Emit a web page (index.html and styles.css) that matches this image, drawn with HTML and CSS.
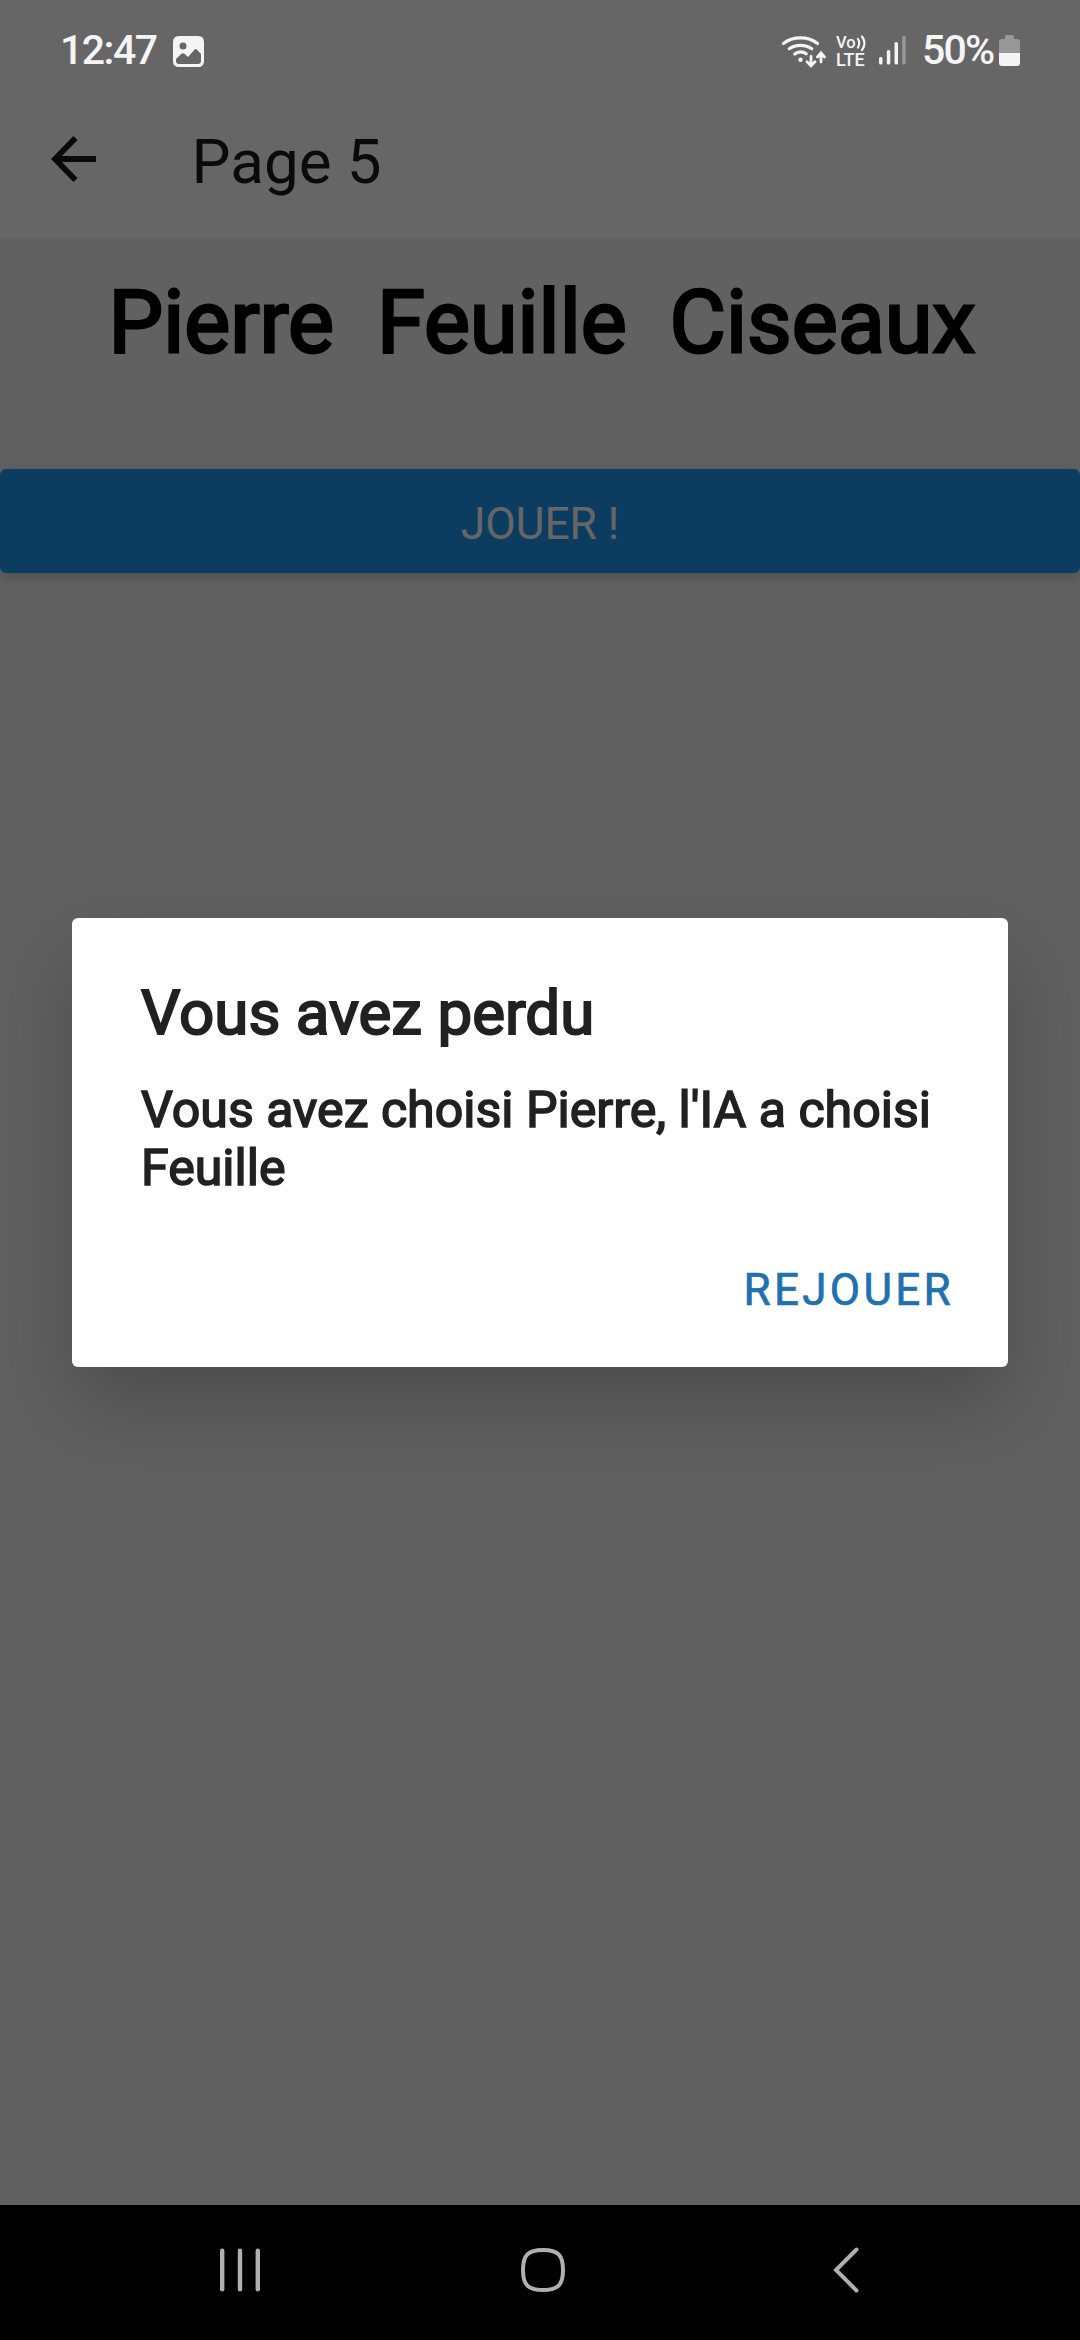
FILE: index.html
```html
<!DOCTYPE html>
<html lang="fr">
<head>
<meta charset="utf-8">
<title>Page 5</title>
<link rel="stylesheet" href="styles.css">
</head>
<body>
<div class="screen">
  <div class="status">
    <span class="clock">12:47</span>
    <svg class="picture" width="31" height="31" viewBox="0 0 31 31"><path fill="currentColor" fill-rule="evenodd" d="M6 0H25Q31 0 31 6V25Q31 31 25 31H6Q0 31 0 25V6Q0 0 6 0ZM10 6.500A3.500 3.500 0 1 0 10 13.500A3.500 3.500 0 1 0 10 6.500ZM3 23V25Q3 28 6 28H25Q28 28 28 25V18L24 13.700Q22.700 12.500 21.400 13.700L15 21L11.500 17.800Q10 16.800 8.500 17.800Z"/></svg>
    <div class="indicators">
      <svg class="wifi" width="46" height="34" viewBox="0 0 46 34" fill="none" stroke="currentColor" stroke-width="3.200" stroke-linecap="round"><path d="M3.500 8.500Q10.500 2.900 20.500 2.900Q30.500 2.900 37.500 8.500M9.300 13.700Q14 10.300 20.500 10.300Q27 10.300 31.700 13.700M14.800 19Q17.300 16.800 20.500 16.800Q23.700 16.800 26.200 18.800"/><circle cx="20.500" cy="24.800" r="2.200" fill="currentColor" stroke="none"/><path stroke-width="2.800" d="M31 21.500V31M27 26.800L31 30.800L35 26.800M41 27V18.500M37.500 22L41 18L44.500 22"/></svg>
      <div class="volte"><span class="vo">Vo<svg width="11" height="17" viewBox="0 0 11 17" fill="none" stroke="currentColor" stroke-width="2.200" stroke-linecap="round"><path d="M2 4Q4.500 8 2 12.500M6 1.500Q11 8 6 15"/></svg></span><span class="lte">LTE</span></div>
      <svg class="signal" width="28" height="30" viewBox="0 0 28 30" fill="currentColor"><rect x="0" y="22" width="3.500" height="7.500" rx="1.500"/><rect x="7.800" y="15" width="3.500" height="14.500" rx="1.500"/><rect x="15.500" y="7" width="3.500" height="22.500" rx="1.500"/><rect x="23.200" y="0.500" width="3.500" height="29" rx="1.500" opacity=".35"/></svg>
      <span class="percent">50%</span>
      <svg class="battery" width="21" height="32" viewBox="0 0 21 32" fill="currentColor"><path opacity=".35" d="M6 1.500Q6 0 7.500 0H13.500Q15 0 15 1.500V4H18Q21 4 21 7V18H0V7Q0 4 3 4H6Z"/><path d="M0 18H21V28Q21 31 18 31H3Q0 31 0 28Z"/></svg>
    </div>
  </div>
  <header class="appbar">
    <svg class="arrow" width="45" height="46" viewBox="0 0 45 46" fill="none" stroke="currentColor" stroke-width="5.800"><path d="M45 23H5M24.500 2L4 23L24.500 44"/></svg>
    <h1 class="title">Page 5</h1>
  </header>
  <main class="content">
    <h2 class="heading">Pierre&nbsp; Feuille&nbsp; Ciseaux</h2>
    <button class="play">JOUER !</button>
  </main>
  <nav class="navbar">
    <svg width="40" height="46" viewBox="0 0 40 46" fill="currentColor"><rect x="0" y="1.500" width="4.400" height="43" rx="2.200"/><rect x="17.800" y="1.500" width="4.400" height="43" rx="2.200"/><rect x="35.600" y="1.500" width="4.400" height="43" rx="2.200"/></svg>
    <svg class="home" width="44" height="46" viewBox="0 0 44 46" fill="none" stroke="currentColor" stroke-width="4"><path d="M22 3C37 3 42 8 42 23C42 38 37 43 22 43C7 43 2 38 2 23C2 8 7 3 22 3Z"/></svg>
    <svg class="back" width="27" height="46" viewBox="0 0 27 46" fill="none" stroke="currentColor" stroke-width="4" stroke-linecap="round"><path d="M23.500 2.500L3 23L23.500 43.500"/></svg>
  </nav>
  <div class="scrim">
    <section class="dialog" role="dialog">
      <h2 class="dialog-title">Vous avez perdu</h2>
      <p class="message">Vous avez choisi Pierre, l'IA a choisi Feuille</p>
      <button class="replay">REJOUER</button>
    </section>
  </div>
</div>
</body>
</html>
```
FILE: styles.css
```css
* { box-sizing: border-box; }
body { margin: 0; font-family: Roboto, sans-serif; }
svg { display: block; flex: none; }
h1, h2, p { margin: 0; font-weight: 400; }
button { border: 0; font-family: inherit; }

.screen { position: relative; width: 1080px; height: 2340px; display: flex; flex-direction: column; background: #f2f2f2; overflow: hidden; }

.status { height: 84px; padding: 35px 60px 0 60px; display: flex; align-items: flex-start; background: #fff; color: #f5f5f5; font-weight: 500; font-size: 41px; line-height: 30px; }
.status > * { position: relative; z-index: 2; }
.clock { width: 113px; letter-spacing: -1.5px; white-space: nowrap; }
.picture { margin-top: 1px; }
.indicators { margin-left: auto; display: flex; align-items: flex-start; }
.volte { margin: 1px 0 0 10px; width: 31px; font-size: 18px; line-height: 14px; font-weight: 500; }
.vo, .lte { display: flex; height: 17px; }
.vo { font-size: 16.5px; }
.vo svg { margin: -1px -2px 0 0; }
.signal { margin-left: 12px; }
.percent { margin-left: 15px; width: 77px; letter-spacing: -1.8px; }

.appbar { height: 154px; padding: 0 0 4px 51px; display: flex; align-items: center; background: #fff; color: #1a1a1a; }
.title { margin-left: 95.5px; padding-top: 5px; font-size: 61.9px; line-height: 80px; }

.content { flex: 1; }
.heading { height: 231px; padding: 32px 0 0 4px; text-align: center; font-size: 86.6px; line-height: 106px; color: #000; -webkit-text-stroke: 2.8px #000; }
.play { display: block; width: 100%; height: 104px; padding: 6px 0 0; border-radius: 6px; background: #2196f3; color: #fff; font-size: 44.3px; box-shadow: 0 4px 12px rgba(0, 0, 0, .2); }

.navbar { position: relative; z-index: 2; height: 135px; padding: 0 220px 6px 220px; display: flex; justify-content: space-between; align-items: center; background: #000; color: #b0b0b0; }
.home { margin-right: 7px; }

.scrim { position: absolute; inset: 0; z-index: 1; background: rgba(0, 0, 0, .6); }
.dialog { margin: 918px 72px 0; height: 449px; padding: 59px 54px 0 69px; display: flex; flex-direction: column; border-radius: 6px; background: #fff; color: #212121; box-shadow: 0 38px 84px rgba(0, 0, 0, .22); }
.dialog-title { font-size: 61.9px; line-height: 72px; -webkit-text-stroke: 2px #212121; }
.message { margin-top: 32px; font-size: 50.1px; line-height: 58px; -webkit-text-stroke: 1.6px #212121; }
.replay { align-self: flex-end; margin-top: 63px; padding: 0; background: none; color: #2071b0; font-size: 44px; line-height: 60px; letter-spacing: 3.3px; -webkit-text-stroke: .7px #2071b0; }
```
